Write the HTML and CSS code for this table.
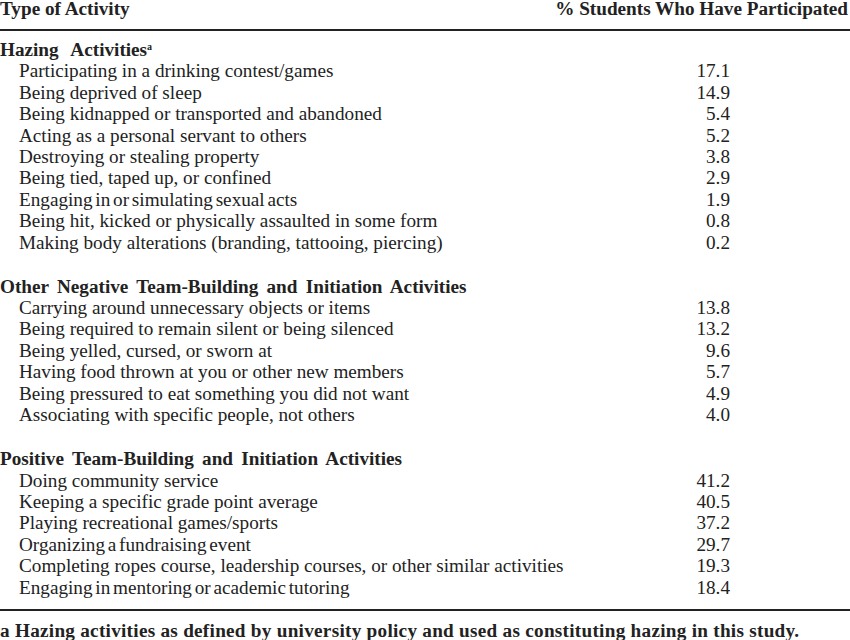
FILE: index.html
```html
<!DOCTYPE html>
<html>
<head>
<meta charset="utf-8">
<link rel="stylesheet" href="styles.css">
</head>
<body>
<div class="page">
  <div class="head">
    <span class="h-left">Type of Activity</span>
    <span class="h-right">% Students Who Have Participated</span>
  </div>
  <div class="body">
    <div class="group">
      <div class="gtitle wide">Hazing Activities<sup>a</sup></div>
      <div class="row"><span class="lab">Participating in a drinking contest/games</span><span class="num">17.1</span></div>
      <div class="row"><span class="lab">Being deprived of sleep</span><span class="num">14.9</span></div>
      <div class="row"><span class="lab">Being kidnapped or transported and abandoned</span><span class="num">5.4</span></div>
      <div class="row"><span class="lab">Acting as a personal servant to others</span><span class="num">5.2</span></div>
      <div class="row"><span class="lab">Destroying or stealing property</span><span class="num">3.8</span></div>
      <div class="row"><span class="lab">Being tied, taped up, or confined</span><span class="num">2.9</span></div>
      <div class="row"><span class="lab tight">Engaging in or simulating sexual acts</span><span class="num">1.9</span></div>
      <div class="row"><span class="lab">Being hit, kicked or physically assaulted in some form</span><span class="num">0.8</span></div>
      <div class="row"><span class="lab">Making body alterations (branding, tattooing, piercing)</span><span class="num">0.2</span></div>
    </div>
    <div class="group">
      <div class="gtitle">Other Negative Team-Building and Initiation Activities</div>
      <div class="row"><span class="lab">Carrying around unnecessary objects or items</span><span class="num">13.8</span></div>
      <div class="row"><span class="lab">Being required to remain silent or being silenced</span><span class="num">13.2</span></div>
      <div class="row"><span class="lab">Being yelled, cursed, or sworn at</span><span class="num">9.6</span></div>
      <div class="row"><span class="lab">Having food thrown at you or other new members</span><span class="num">5.7</span></div>
      <div class="row"><span class="lab">Being pressured to eat something you did not want</span><span class="num">4.9</span></div>
      <div class="row"><span class="lab">Associating with specific people, not others</span><span class="num">4.0</span></div>
    </div>
    <div class="group">
      <div class="gtitle">Positive Team-Building and Initiation Activities</div>
      <div class="row"><span class="lab">Doing community service</span><span class="num">41.2</span></div>
      <div class="row"><span class="lab">Keeping a specific grade point average</span><span class="num">40.5</span></div>
      <div class="row"><span class="lab">Playing recreational games/sports</span><span class="num">37.2</span></div>
      <div class="row"><span class="lab tight">Organizing a fundraising event</span><span class="num">29.7</span></div>
      <div class="row"><span class="lab">Completing ropes course, leadership courses, or other similar activities</span><span class="num">19.3</span></div>
      <div class="row"><span class="lab tight">Engaging in mentoring or academic tutoring</span><span class="num">18.4</span></div>
    </div>
  </div>
  <div class="foot">a Hazing activities as defined by university policy and used as constituting hazing in this study.</div>
</div>
</body>
</html>
```
FILE: styles.css
```css
html, body {
  margin: 0;
  padding: 0;
  background: #ffffff;
}
.page {
  width: 850px;
  height: 640px;
  overflow: hidden;
  font-family: "Liberation Serif", "Times New Roman", serif;
  font-size: 19.2px;
  color: #222222;
  line-height: 21.4px;
}
.head {
  display: flex;
  justify-content: space-between;
  align-items: flex-start;
  font-weight: bold;
  line-height: 18px;
  height: 29px;
  border-bottom: 2px solid #222222;
  padding-right: 2px;
}
.body {
  display: flex;
  flex-direction: column;
  gap: 22.6px;
  padding-top: 8px;
  padding-bottom: 11px;
  border-bottom: 2px solid #222222;
}
.gtitle {
  font-weight: bold;
  word-spacing: 3.5px;
}
.gtitle.wide {
  word-spacing: 8px;
}
.gtitle sup {
  font-size: 10px;
  line-height: 0;
  vertical-align: 6px;
}
.row {
  display: flex;
  padding-left: 19px;
}
.lab {
  flex: 1;
}
.tight {
  word-spacing: -2px;
}
.num {
  width: 60px;
  text-align: right;
  margin-right: 120px;
}
.foot {
  font-weight: bold;
  padding-top: 9px;
  letter-spacing: 0.27px;
}
```
